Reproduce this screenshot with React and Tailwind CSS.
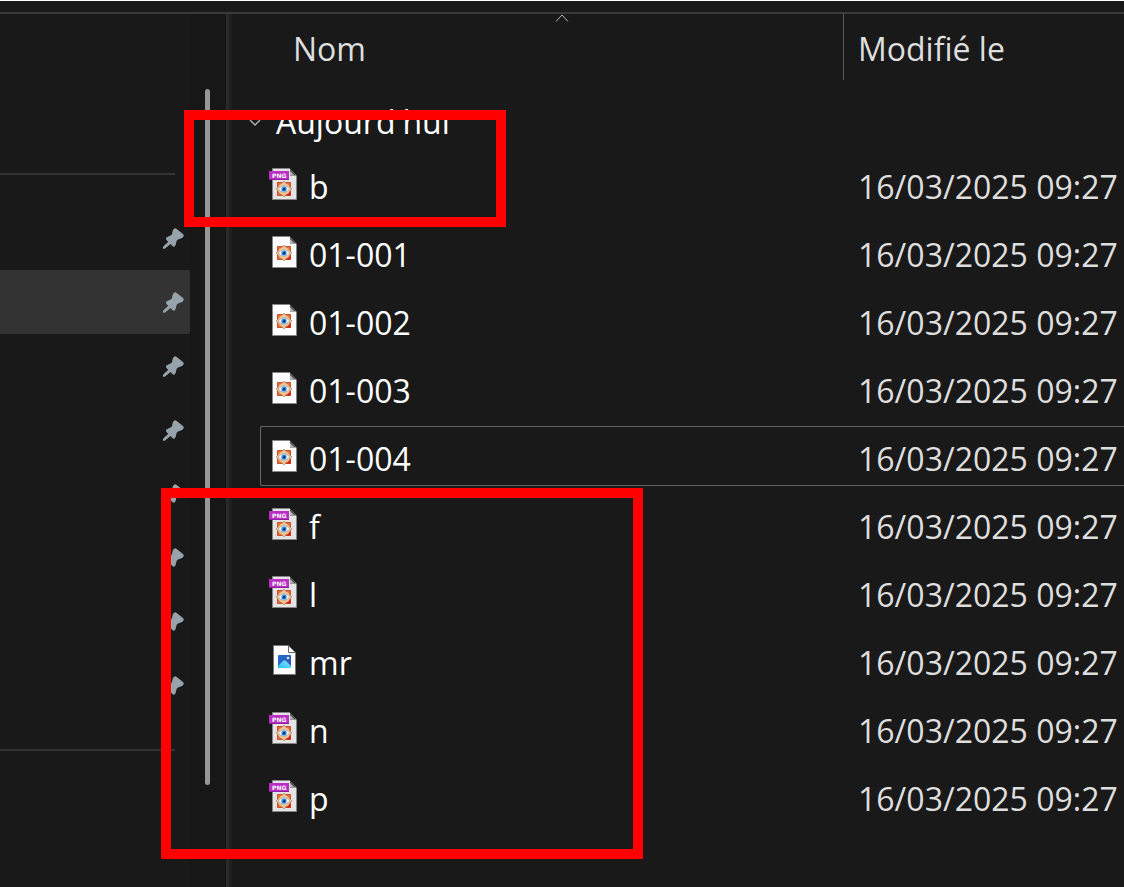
import clsx from 'clsx';

const files = [
  { name: 'b', type: 'png' },
  { name: '01-001', type: 'image' },
  { name: '01-002', type: 'image' },
  { name: '01-003', type: 'image' },
  { name: '01-004', type: 'image', focused: true },
  { name: 'f', type: 'png' },
  { name: 'l', type: 'png' },
  { name: 'mr', type: 'photo' },
  { name: 'n', type: 'png' },
  { name: 'p', type: 'png' }
];

const modified = '16/03/2025 09:27';

const pinned = [1, 2, 3, 4, 5, 6, 7, 8];

const PinIcon = () => (
  <svg viewBox="0 0 63 63" className="h-[21px] w-[21px]" fill="#97a3aa">
    <path d="M30 6 Q35 -2 41 3 L60 18 Q64 23 60 28 Q57 31 47 34 Q41 36 40 41 L38 51 Q34 60 28 54 L23 48 L7 61 Q2 65 0 60 Q-1 56 3 53 L16 41 L10 36 Q7 30 13 27 L24 22 Q28 20 28 13 Z" />
  </svg>
);

// Eye on a red tile, drawn around 16,y
const Eye = ({ y }) => (
  <g transform={`translate(16 ${y})`}>
    <rect x="-7" y="-7" width="14" height="14" rx="1" fill="#a8381c" />
    <rect x="-6.500" y="-6.500" width="13" height="13" fill="#f26a38" />
    <path d="M0 6.500 H6.500 V0 Z" fill="#e01a08" />
    <path
      d="M0 -8 Q2 -5 4.500 -4.500 Q5.500 -2 8 0 Q5.500 2 4.500 4.500 Q2 5 0 8 Q-2 5 -4.500 4.500 Q-5.500 2 -8 0 Q-5.500 -2 -4.500 -4.500 Q-2 -5 0 -8 Z"
      fill="#efc599"
      stroke="#a87848"
      strokeWidth="0.6"
    />
    <path d="M-6 0 Q0 -6.500 6 0 Q0 6.500 -6 0 Z" fill="#f4f8fb" stroke="#8a8078" strokeWidth="0.5" />
    <circle r="2.600" fill="#1f86ea" />
    <circle r="1.200" fill="#06204e" />
    <circle cx="-1" cy="-1" r="0.6" fill="#9fe0ff" />
  </g>
);

const FileIcon = ({ type }) => {
  if (type === 'photo') {
    return (
      <svg viewBox="0 0 32 32" className="h-8 w-8 shrink-0">
        <defs>
          <linearGradient id="sky" x1="0" y1="0" x2="1" y2="1">
            <stop offset="0" stopColor="#1c6fd0" />
            <stop offset="1" stopColor="#3b4fb4" />
          </linearGradient>
          <linearGradient id="hill" x1="0" y1="1" x2="1" y2="0">
            <stop offset="0" stopColor="#1fc4f4" />
            <stop offset="1" stopColor="#8fdcfb" />
          </linearGradient>
        </defs>
        <path d="M5.5 1.5 H20.5 L27.5 8.5 V30.5 H5.5 Z" fill="#fcfcfc" stroke="#777" />
        <path d="M20.5 1.5 V8.5 H27.5 Z" fill="#fff" stroke="#666" />
        <rect x="10" y="11" width="13" height="13" rx="1" fill="url(#sky)" />
        <path d="M10 22 L15 17 Q16.500 15.500 18 17 L23 22 V24 H10 Z" fill="url(#hill)" />
        <circle cx="20" cy="14" r="1.300" fill="#d8ebff" />
      </svg>
    );
  }

  const isPng = type === 'png';
  return (
    <svg viewBox="0 0 32 32" className="h-8 w-8 shrink-0">
      <path
        d="M4.5 0.5 H21.5 L28.5 7.5 V31.5 H4.5 Z"
        fill={isPng ? '#e4e4e4' : '#fdfdfd'}
        stroke="#858585"
      />
      <path d="M22 0 H29 V8 Z" fill="#191919" />
      <path d="M22 1 L28.500 7.500 H22 Z" fill="#4a4a4a" />
      <path d="M22 3 L26 7 H22 Z" fill="#b5b5b5" />
      <Eye y={isPng ? 21 : 17} />
      {isPng && (
        <>
          <rect x="1" y="3" width="20" height="9" fill="#b92fc4" />
          <path d="M1 11.500 H21" stroke="#8f1f9a" />
          <text
            x="4"
            y="10"
            fill="#fff"
            className="font-['DejaVu_Sans'] text-[6px] font-bold"
          >
            PNG
          </text>
        </>
      )}
    </svg>
  );
};

const Sidebar = () => (
  <nav className="w-[190px] shrink-0 pt-[159px]">
    <hr className="mr-[15px] border-t-2 border-[#343434]" />
    <ul className="my-[31px]">
      {pinned.map((item) => (
        <li key={item}>
          <button
            type="button"
            aria-label="Épinglé"
            className={clsx(
              'flex h-16 w-full items-center justify-end rounded-r-xs pr-[6px]',
              item === 2 && 'bg-[#333333]'
            )}
          >
            <PinIcon />
          </button>
        </li>
      ))}
    </ul>
    <hr className="mr-[15px] border-t-2 border-[#343434]" />
  </nav>
);

const FileTable = () => (
  <table className="w-full table-fixed border-collapse text-left">
    <colgroup>
      <col className="w-[612px]" />
      <col />
    </colgroup>
    <thead className="text-[#dedede]">
      <tr>
        <th scope="col" className="p-0 font-normal">
          <div className="relative ml-12 flex h-[66px] items-center border-r border-[#5c5c5c] pl-[13px]">
            <svg
              viewBox="0 0 13 8"
              className="absolute top-0 left-1/2 h-2 w-[13px] -translate-x-1/2"
              fill="none"
              stroke="#b8b8b8"
            >
              <path d="M0.500 7.500 L6.500 1 L12.500 7.500" />
            </svg>
            <span className="pt-1">Nom</span>
          </div>
        </th>
        <th scope="col" className="p-0 font-normal">
          <div className="flex h-[66px] items-center pl-[14px]">
            <span className="pt-1">Modifié le</span>
          </div>
        </th>
      </tr>
    </thead>
    <tbody>
      <tr>
        <th scope="rowgroup" colSpan={2} className="p-0 font-normal text-white">
          <div className="flex h-[74px] items-center gap-[15px] pt-[10px] pl-[17px]">
            <svg viewBox="0 0 12 7" className="h-[7px] w-3" fill="none" stroke="#a8a8a8" strokeWidth="1.500">
              <path d="M1 1 L6 6 L11 1" />
            </svg>
            <span>Aujourd&apos;hui</span>
          </div>
        </th>
      </tr>
      {files.map((file) => (
        <tr key={file.name}>
          <td className="p-0 pb-2 pl-7">
            <div
              className={clsx(
                'flex h-[60px] items-center gap-[9px] rounded-l-xs border-y border-l pl-[7px] text-white',
                file.focused ? 'border-[#666666]' : 'border-transparent'
              )}
            >
              <FileIcon type={file.type} />
              <span className="pt-1.5">{file.name}</span>
            </div>
          </td>
          <td className="p-0 pb-2">
            <div
              className={clsx(
                'flex h-[60px] items-center overflow-hidden border-y pl-[14px] whitespace-nowrap text-[#dedede]',
                file.focused ? 'border-[#666666]' : 'border-transparent'
              )}
            >
              <span className="pt-1.5">{modified}</span>
            </div>
          </td>
        </tr>
      ))}
    </tbody>
  </table>
);

export default function App() {
  return (
    <div className="relative flex min-h-screen flex-col overflow-hidden border-t border-white bg-[#191919] font-['Open_Sans','Noto_Sans',sans-serif] text-[32px] leading-[44px]">
      <div className="h-[13px] shrink-0 border-b-2 border-[#3a3a3a]" />
      <div className="flex flex-1">
        <Sidebar />
        <div className="w-9 shrink-0 bg-[#171717] pt-[75px] pl-[15px]">
          <div className="h-[696px] w-[5px] rounded-full bg-[#979797]" />
        </div>
        <main className="min-w-0 flex-1 border-l-3 border-[#2a2a2a] pl-[3px] shadow-[inset_3px_0_0_#1f1f1f]">
          <FileTable />
        </main>
      </div>

      {/* Highlight frames over the listing */}
      <div className="pointer-events-none absolute top-[109px] left-[184px] h-[117px] w-[322px] border-10 border-[#ff0000]" />
      <div className="pointer-events-none absolute top-[487px] left-[161px] h-[371px] w-[482px] border-10 border-[#ff0000]" />
    </div>
  );
}
